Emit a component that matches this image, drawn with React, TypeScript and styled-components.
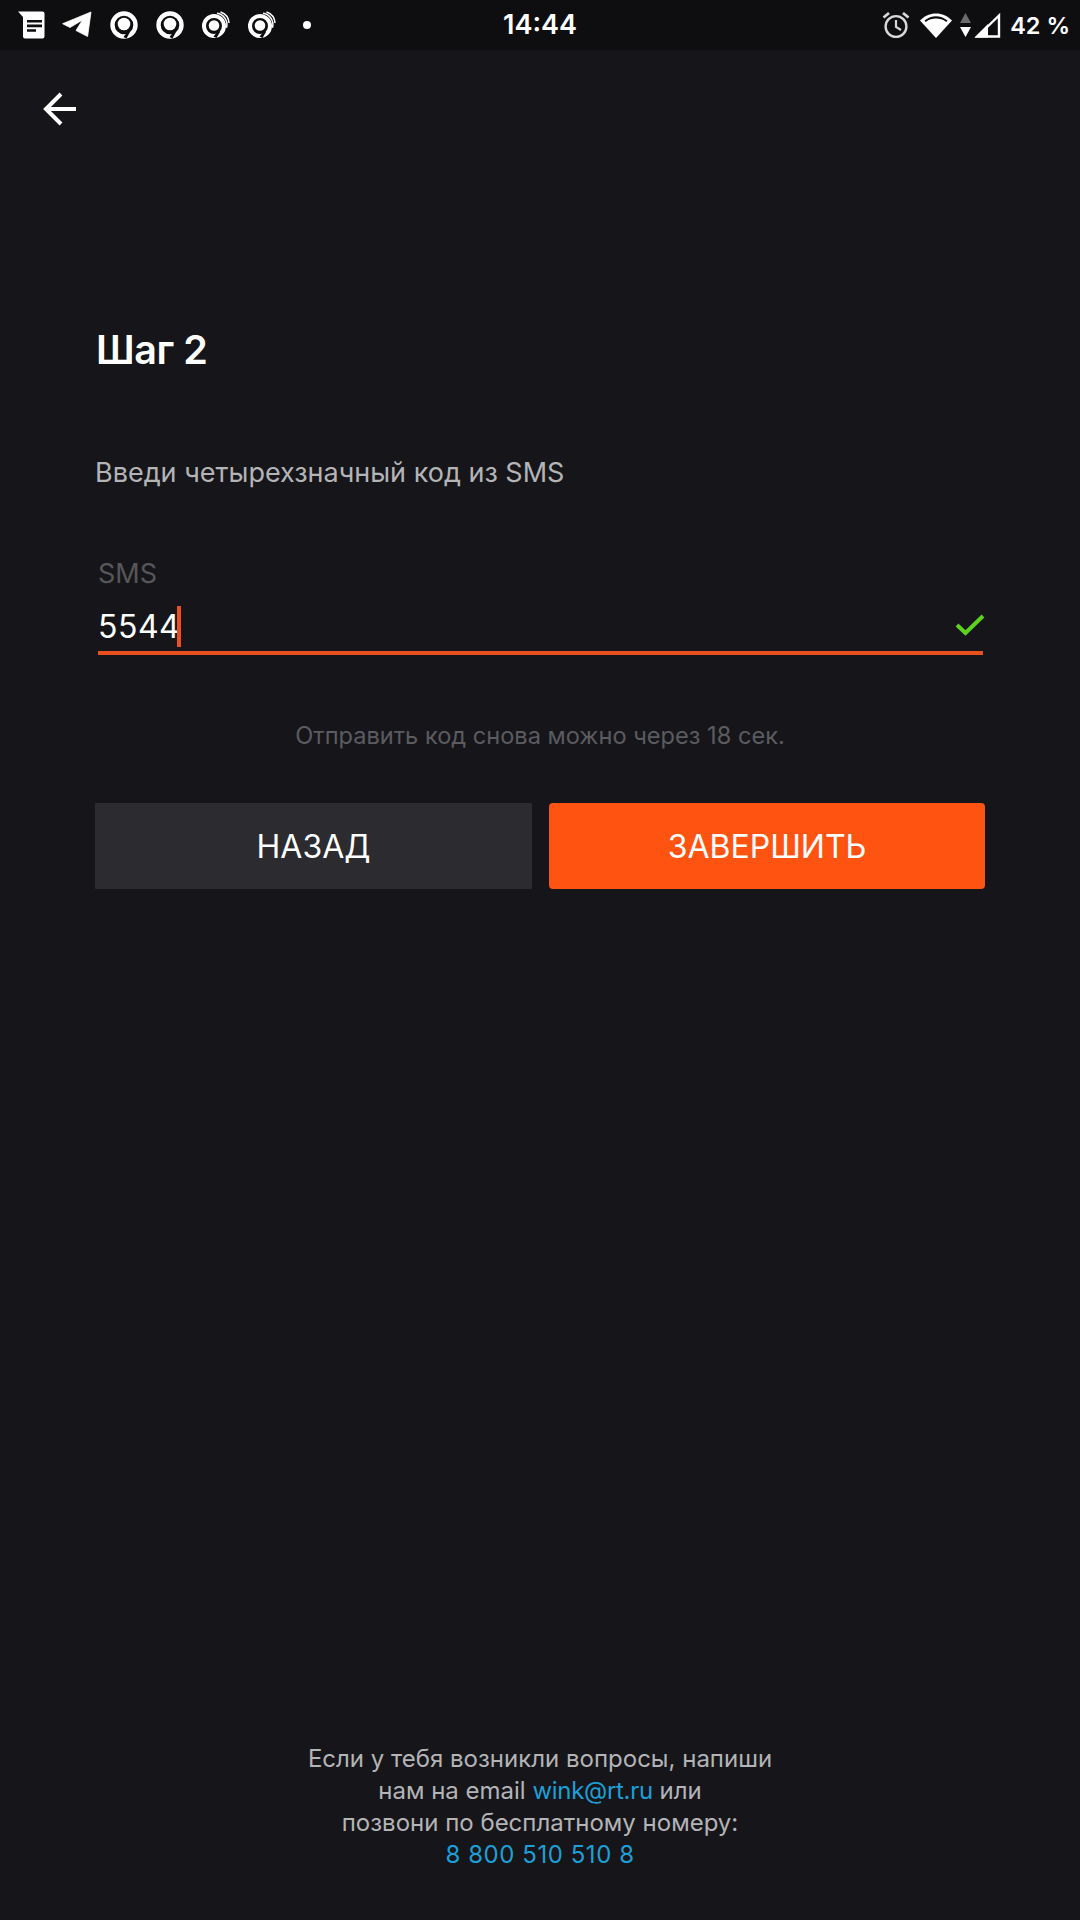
import React from 'react';
import styled, { createGlobalStyle } from 'styled-components';

const Global = createGlobalStyle`
  html, body { margin: 0; padding: 0; background: #16161a; }
  body { font-family: Inter, "Noto Sans", sans-serif; }
`;
const Page = styled.div`
  width: 1080px; height: 1920px; display: flex; flex-direction: column;
  background: #16161a; overflow: hidden;
`;
const StatusBar = styled.div`
  height: 50px; flex: none; background: #0e0e10; display: grid;
  grid-template-columns: 1fr auto 1fr; align-items: center; color: #fff;
`;
const StatusLeft = styled.div`
  display: flex; align-items: center; gap: 16px; padding-left: 18px; height: 50px;
`;
const StatusRight = styled.div`
  display: flex; align-items: center; justify-content: flex-end; padding-right: 10px; height: 50px;
`;
const Clock = styled.div`
  font-size: 27px; font-weight: 600; line-height: 50px;
`;
const Battery = styled.span`
  font-size: 23.5px; font-weight: 600; margin-left: 9px;
`;
const Glyph = styled.svg<{ $ml?: number }>`
  display: block; flex: none; margin-left: ${p => p.$ml ?? 0}px;
`;
const TopBar = styled.div`
  height: 118px; flex: none; display: flex; align-items: center; padding-left: 43px;
`;
const Content = styled.main`
  flex: 1; display: flex; flex-direction: column; padding: 0 95px;
`;
const Title = styled.h1`
  margin: 160px 0 0 1px; font-size: 39.5px; line-height: 44px; font-weight: 600; color: #fff; letter-spacing: -0.4px;
`;
const Lead = styled.p`
  margin: 84px 0 0 0; font-size: 27px; line-height: 34px; color: #b4b4b7; font-weight: 400;
`;
const Field = styled.div`
  margin: 69px 0 0 3px; width: 885px; border-bottom: 4px solid #e8501f; position: relative;
`;
const Label = styled.div`
  font-size: 27px; line-height: 30px; color: #56565b;
`;
const ValueRow = styled.div`
  display: flex; align-items: flex-end; height: 52px; padding-bottom: 4px; box-sizing: border-box; margin-top: 10px;
`;
const Value = styled.span`
  font-size: 32px; line-height: 40px; color: #fff; letter-spacing: 0.5px;
`;
const Caret = styled.span`
  width: 4px; height: 41px; background: #e8501f; flex: none; margin-left: -3px;
`;
const Check = styled.svg`
  position: absolute; right: -2px; bottom: 14px; display: block;
`;
const Hint = styled.p`
  margin: 66px 0 0; text-align: center; font-size: 23.6px; line-height: 30px; color: #5b5b60;
`;
const Actions = styled.div`
  margin-top: 52px; display: grid; grid-template-columns: 437px 436px; gap: 17px; width: 890px;
`;
const Button = styled.button<{ $primary?: boolean }>`
  height: 86px; border: 0; border-radius: ${p => (p.$primary ? '4px' : '1px')}; padding: 0; font-family: inherit;
  background: ${p => (p.$primary ? '#ff5312' : '#2b2b30')};
  color: #fff; font-size: 32px; font-weight: 400;
`;
const Footer = styled.footer`
  margin-top: auto; padding-bottom: 49px; text-align: center;
  font-size: 24px; line-height: 32px; color: #b4b4b7;
`;
const Line = styled.div``;
const Link = styled.span`color: #1c9fd8; letter-spacing: -0.3px;`;
const Phone = styled.span`color: #1c9fd8; letter-spacing: 0.55px;`;
const Dot = styled.span`
  width: 8px; height: 8px; border-radius: 50%; background: #fff; margin-left: 10px; flex: none;
`;

const Messages = () => (
  <Glyph width="28" height="28" viewBox="0 0 28 28">
    <path fill="#fff" d="M0 0.5H24.5a2 2 0 0 1 2 2V25.5a2 2 0 0 1-2 2H7a2 2 0 0 1-2-2V6Z" />
    <path fill="#0e0e10" d="M9 9h15v2.6H9zM9 13.6h15v2.6H9zM9 18.2h9v2.6H9z" />
  </Glyph>
);
const Telegram = () => (
  <Glyph width="31" height="28" viewBox="0 0 31 28">
    <path fill="#fff" stroke="#fff" strokeWidth="0.8" strokeLinejoin="round" d="M0.6 12.7 29 1 25.6 25.5 14 19.5 20.5 9 8 16.5Z" />
  </Glyph>
);
const Ring = ({ stacked }: { stacked?: boolean }) => (
  <Glyph width="30" height="28" viewBox="0 0 30 28">
    {stacked && (
      <path fill="none" stroke="#fff" strokeWidth="1.5" d="M16 2.2a11.5 11.5 0 0 1 9.5 14.5M19.5 1a12.5 12.5 0 0 1 8.5 11" />
    )}
    <circle cx={stacked ? 13 : 15} cy={stacked ? 15 : 14} r={stacked ? 10 : 11.5} fill="none" stroke="#fff" strokeWidth={stacked ? 4 : 4.4} />
    <circle cx={stacked ? 13 : 15} cy={stacked ? 14.5 : 13} r={stacked ? 5.3 : 6.3} fill="#fff" />
    <path fill="#0e0e10" d={stacked ? 'M12.5 25.5 17.5 19.5 19 21 15.5 27Z' : 'M14.5 26 19.5 19.5 21 21 17.5 27.5Z'} />
  </Glyph>
);
const Alarm = () => (
  <Glyph width="28" height="28" viewBox="0 0 28 28">
    <circle cx="14" cy="15.5" r="10.4" fill="none" stroke="#d8d8d8" strokeWidth="2.4" />
    <path fill="none" stroke="#d8d8d8" strokeWidth="2.2" d="M14 9v7l5 3" />
    <path fill="none" stroke="#d8d8d8" strokeWidth="2.8" d="M1.5 6.5 7 2M26.5 6.5 21 2" />
  </Glyph>
);
const Wifi = () => (
  <Glyph $ml={9} width="34" height="28" viewBox="0 0 34 28">
    <path fill="#fff" d="M1 9.5C5.5 5 11 2.5 17 2.5S28.5 5 33 9.5L17 27Z" />
    <path fill="#0e0e10" d="M5.5 9.5C9 6.7 13 5.2 17 5.2s8 1.5 11.5 4.3l-1.2 1.4C24 8.6 20.5 7.6 17 7.6S10 8.6 6.7 10.9Z" />
  </Glyph>
);
const Arrows = () => (
  <Glyph $ml={6} width="13" height="26" viewBox="0 0 13 26">
    <path fill="#6b6b6d" d="M6.5 1 12 11H1Z" />
    <path fill="#fff" d="M1 15H12L6.5 25Z" />
  </Glyph>
);
const Signal = () => (
  <Glyph $ml={1} width="28" height="28" viewBox="0 0 28 28">
    <path fill="none" stroke="#fff" strokeWidth="2.4" d="M26 4.5V25.5H4.5Z" />
    <path fill="#fff" d="M15 15.5V26.5H1.5L15 13Z" />
  </Glyph>
);

export default function App() {
  return (
    <Page>
      <Global />
      <StatusBar>
        <StatusLeft>
          <Messages />
          <Telegram />
          <Ring />
          <Ring />
          <Ring stacked />
          <Ring stacked />
          <Dot />
        </StatusLeft>
        <Clock>14:44</Clock>
        <StatusRight>
          <Alarm />
          <Wifi />
          <Arrows />
          <Signal />
          <Battery>42 %</Battery>
        </StatusRight>
      </StatusBar>
      <TopBar>
        <Glyph width="34" height="34" viewBox="0 0 34 34">
          <path fill="none" stroke="#fff" strokeWidth="4" d="M33 17H3M18 2 3 17l15 15" />
        </Glyph>
      </TopBar>
      <Content>
        <Title>Шаг 2</Title>
        <Lead>Введи четырехзначный код из SMS</Lead>
        <Field>
          <Label>SMS</Label>
          <ValueRow>
            <Value>5544</Value>
            <Caret />
          </ValueRow>
          <Check width="30" height="24" viewBox="0 0 30 24">
            <path fill="none" stroke="#5ed01f" strokeWidth="4" d="M2 12l8.5 8L28 3" />
          </Check>
        </Field>
        <Hint>Отправить код снова можно через 18 сек.</Hint>
        <Actions>
          <Button>НАЗАД</Button>
          <Button $primary>ЗАВЕРШИТЬ</Button>
        </Actions>
        <Footer>
          <Line>Если у тебя возникли вопросы, напиши</Line>
          <Line>нам на email <Link>wink@rt.ru</Link> или</Line>
          <Line>позвони по бесплатному номеру:</Line>
          <Line><Phone>8 800 510 510 8</Phone></Line>
        </Footer>
      </Content>
    </Page>
  );
}
